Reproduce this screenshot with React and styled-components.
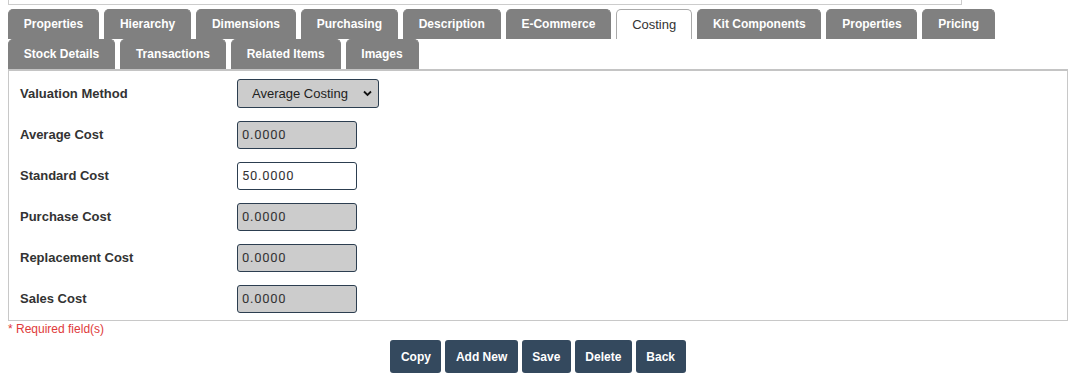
import styled, { createGlobalStyle } from "styled-components"
import { useState } from 'react'

const GlobalStyle = createGlobalStyle`
    body {
        margin: 0;
        background: #fff;
        font-family: "Liberation Sans", Arial, sans-serif;
        color: #333;
    }
`

const Page = styled.div`
    padding: 0 14px 0 8px;
`

const TopBox = styled.div`
    width: 952px;
    height: 4px;
    border: 1px solid #ccc;
    border-top: none;
`

const TabStrip = styled.div`
    display: flex;
    flex-wrap: wrap;
    column-gap: 5px;
    margin-top: 4px;
`

const Tab = styled.div`
    height: 30px;
    box-sizing: border-box;
    padding: 0 14.85px 1px;
    display: flex;
    align-items: center;
    border: 1px solid ${p => p.active ? '#aaa' : '#808080'};
    border-bottom: none;
    border-radius: 5px 5px 0 0;
    background: ${p => p.active ? '#fff' : '#808080'};
    color: ${p => p.active ? '#333' : '#fff'};
    font-size: ${p => p.active ? '13px' : '12px'};
    font-weight: ${p => p.active ? 'normal' : 'bold'};
    cursor: pointer;
    white-space: nowrap;
`

const Panel = styled.div`
    border: 1px solid #c8c8c8;
    border-top: 2px solid #c4c4c4;
    padding: 2px 11px 1px;
`

const Row = styled.div`
    display: flex;
    align-items: center;
    height: 41px;
`

const Label = styled.label`
    width: 217px;
    font-size: 13px;
    font-weight: bold;
    color: #333;
`

const Input = styled.input`
    width: 120px;
    height: 28px;
    box-sizing: border-box;
    border: 1px solid #2c3e50;
    border-radius: 3px;
    padding: 0 4px;
    font-family: Roboto, "Liberation Sans", Arial, sans-serif;
    font-size: 13px;
    letter-spacing: 0.7px;
    color: #333;
    background: ${p => p.readOnly ? '#cccccc' : '#fff'};
    outline: none;
`

const SelectWrap = styled.div`
    position: relative;
    width: 142px;
    height: 29px;
`

const Select = styled.select`
    appearance: none;
    width: 100%;
    height: 100%;
    box-sizing: border-box;
    border: 1px solid #2c3e50;
    border-radius: 3px;
    padding: 0 24px 0 14px;
    font-family: "Liberation Sans", Arial, sans-serif;
    font-size: 13px;
    color: #222;
    background: #cccccc;
    outline: none;
`

const Chevron = styled.svg`
    position: absolute;
    right: 7px;
    top: 11px;
    width: 9px;
    height: 7px;
    pointer-events: none;
`

const Required = styled.div`
    color: #e03a3a;
    font-size: 12px;
    margin-top: 1px;
    height: 18px;
`

const Actions = styled.div`
    display: flex;
    justify-content: center;
    gap: 4px;
    width: 1060px;
`

const Button = styled.button`
    height: 33px;
    padding: 0 10.5px;
    border: none;
    border-radius: 3px;
    background: #34495e;
    color: #fff;
    font-family: "Liberation Sans", Arial, sans-serif;
    font-size: 12px;
    font-weight: bold;
    cursor: pointer;
`

const tabs = [
    'Properties', 'Hierarchy', 'Dimensions', 'Purchasing', 'Description', 'E-Commerce',
    'Costing', 'Kit Components', 'Properties', 'Pricing', 'Stock Details', 'Transactions',
    'Related Items', 'Images'
]

const costs = [
    { label: 'Average Cost', value: '0.0000', readOnly: true },
    { label: 'Standard Cost', value: '50.0000', readOnly: false },
    { label: 'Purchase Cost', value: '0.0000', readOnly: true },
    { label: 'Replacement Cost', value: '0.0000', readOnly: true },
    { label: 'Sales Cost', value: '0.0000', readOnly: true },
]

function App() {
    const [active, setActive] = useState(6)

    return (
        <Page>
            <GlobalStyle />
            <TopBox />
            <TabStrip>
                {tabs.map((t, i) => (
                    <Tab key={i} active={i === active} onClick={() => setActive(i)}>{t}</Tab>
                ))}
            </TabStrip>
            <Panel>
                <Row>
                    <Label>Valuation Method</Label>
                    <SelectWrap>
                        <Select defaultValue="avg">
                            <option value="avg">Average Costing</option>
                            <option value="std">Standard Costing</option>
                            <option value="fifo">FIFO</option>
                        </Select>
                        <Chevron viewBox="0 0 9 7">
                            <path d="M1 1.5 L4.5 5 L8 1.5" fill="none" stroke="#111" strokeWidth="1.8" />
                        </Chevron>
                    </SelectWrap>
                </Row>
                {costs.map(c => (
                    <Row key={c.label}>
                        <Label>{c.label}</Label>
                        <Input defaultValue={c.value} readOnly={c.readOnly} />
                    </Row>
                ))}
            </Panel>
            <Required>* Required field(s)</Required>
            <Actions>
                <Button>Copy</Button>
                <Button>Add New</Button>
                <Button>Save</Button>
                <Button>Delete</Button>
                <Button>Back</Button>
            </Actions>
        </Page>
    )
}

export default App
